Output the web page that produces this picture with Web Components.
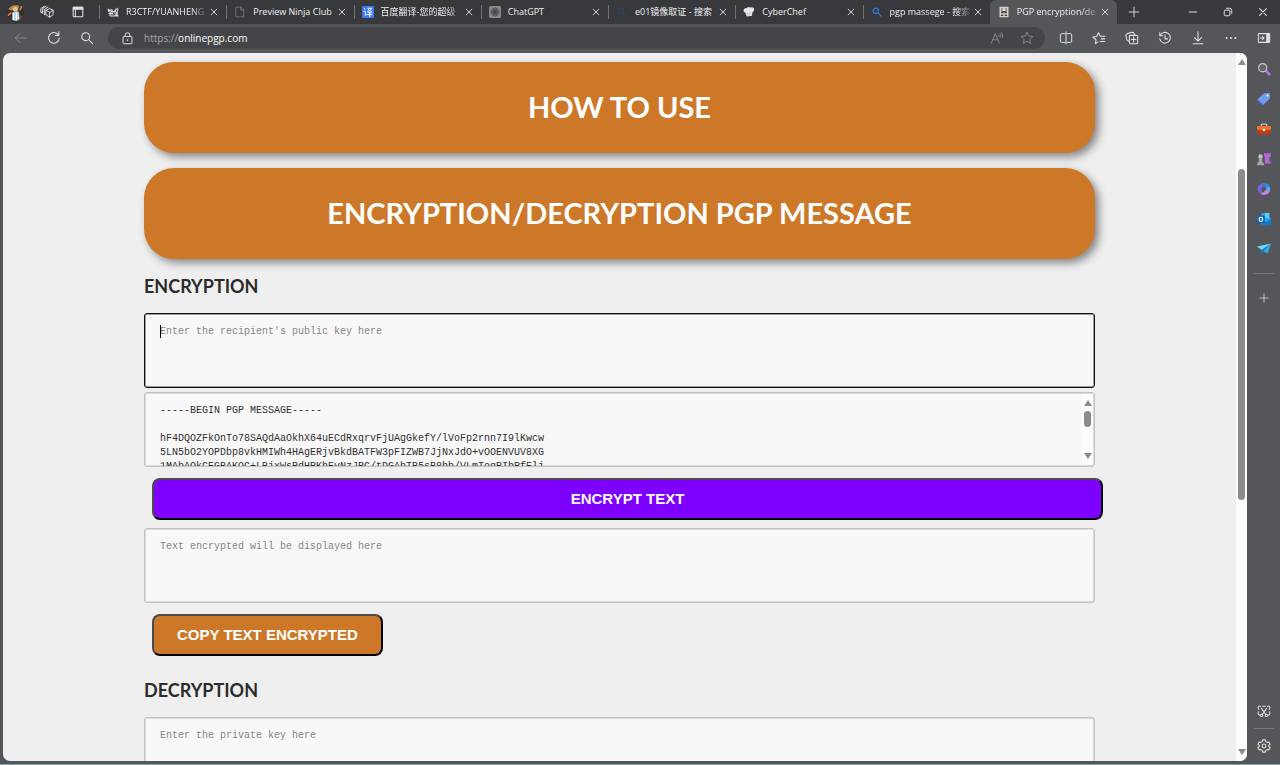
<!DOCTYPE html>
<html lang="en">
<head>
<meta charset="utf-8">
<title>PGP encryption/decryption</title>
<style>
	html, body {
		margin: 0;
		height: 100%;
	}
	body {
		overflow: hidden;
		font-family: "Open Sans", "Noto Sans CJK SC", sans-serif;
		background: #55565a;
	}
</style>
</head>
<body>
<browser-window>
	<browser-tab slot="tabs" icon="cat" text="R3CTF/YUANHENG" long></browser-tab>
	<browser-tab slot="tabs" icon="page" text="Preview Ninja Club"></browser-tab>
	<browser-tab slot="tabs" icon="translate" text="百度翻译-您的超级" long></browser-tab>
	<browser-tab slot="tabs" icon="gpt" text="ChatGPT"></browser-tab>
	<browser-tab slot="tabs" icon="find-dark" text="e01镜像取证 - 搜索"></browser-tab>
	<browser-tab slot="tabs" icon="chef" text="CyberChef"></browser-tab>
	<browser-tab slot="tabs" icon="find-blue" text="pgp massege - 搜索" long></browser-tab>
	<browser-tab slot="tabs" icon="stamp" text="PGP encryption/de" long active></browser-tab>
	<pgp-page></pgp-page>
</browser-window>

<script>
const line = (d,w=1) => `<path d="${d}" fill="none" stroke="currentColor" stroke-width="${w}" stroke-linecap="round" stroke-linejoin="round"/>`;

// every icon is drawn on a 16x16 grid
const icons = {
	avatar: `<circle cx="8" cy="8" r="8" fill="#3b3028"/><path d="M1 5Q6-1 12 2L10 5 4 6z" fill="#b98345"/><circle cx="8" cy="5" r="2.4" fill="#d8c7a2"/><path d="M5 8l6-1 1 7-3 2-4-1z" fill="#b9d7e8"/><path d="M6 8v7M9 8v7" stroke="#fff"/><path d="M12 6l2-4M4 8L1 11" stroke="#c98850" stroke-width="1.5"/><path d="M12 10l3 2-3 3z" fill="#8b3928"/>`,
	workspaces: line("M7 6l4-2 4 2v5l-4 3-4-3zM7 6l4 2.500 4-2.500M11 8.500V14M5 10.500V5l4-2.500M5 10.500l1 .5M3 9V4l4-2.500M1 8V4l4-2.500M1 8l2 1.500",1.1),
	pane: line("M2.500 3.500q0-1 1-1h9q1 0 1 1v9q0 1-1 1h-9q-1 0-1-1zM5 6v7",1.2)+`<path d="M2 2h12v3.500H2z" fill="currentColor"/>`,
	cat: `<path d="M1 3l3 2 3-1 1 3 3-2 1-3 1 2 2-2v4l-1 5 2 3H5l-3-1 3-1-4-2 3-1-3-2z" fill="#d5d5d5"/><path d="M4 7l2 2M8 8l1 3M11 8l-1 4M5 12h5M13 5v3" stroke="#333" stroke-width="1.200"/>`,
	page: line("M3 1.500h6l4 4v9H3zM9 1.500v4h4",1).replace("currentColor","#818286"),
	translate: `<rect width="16" height="16" rx="1" fill="#3a7cf4"/><path d="M2.500 3l2 1.500M2 7h2.500v5.500l1.500-1M7 3h6q-2 4-6 4.500M8 4q2 3 5.500 3.500M7.500 9h5.500M6.500 11.500h7.500M10.300 8v7" stroke="#fff" stroke-width="1.200" fill="none"/>`,
	gpt: `<rect width="16" height="16" rx="2" fill="#88898b"/><g fill="none" stroke="#3d3e40" stroke-width=".9"><ellipse cx="8" cy="5.500" rx="2.600" ry="3"/><ellipse cx="8" cy="5.500" rx="2.600" ry="3" transform="rotate(60 8 8)"/><ellipse cx="8" cy="5.500" rx="2.600" ry="3" transform="rotate(120 8 8)"/><ellipse cx="8" cy="5.500" rx="2.600" ry="3" transform="rotate(180 8 8)"/><ellipse cx="8" cy="5.500" rx="2.600" ry="3" transform="rotate(240 8 8)"/><ellipse cx="8" cy="5.500" rx="2.600" ry="3" transform="rotate(300 8 8)"/></g>`,
	"find-dark": line("M10 6.500a3.500 3.500 0 1 1-7 0 3.500 3.500 0 1 1 7 0M9.500 9.500L13.500 13.500",1.5).replace("currentColor","#294466"),
	"find-blue": line("M10 6.500a3.500 3.500 0 1 1-7 0 3.500 3.500 0 1 1 7 0M9.500 9.500L13.500 13.500",1.8).replace("currentColor","#2e74ce"),
	chef: `<path d="M3 8.500Q0 8 1 4.500q2-3 4-1.500 2-3 5-1 4-1 5 2 0 3.500-2.500 4.500L12 13l-7 1z" fill="#e6e6e6"/><path d="M6 8l.5 5M9 8v4" stroke="#b5b5b5"/>`,
	stamp: `<rect x="2" y="1" width="12" height="14" rx="1" fill="#d6d2c8"/><path d="M4 3h8v7H4z" fill="#8b877d"/><circle cx="8" cy="5" r="2" fill="#eee9dc"/><path d="M5 9q3-3 6 0M4 12.500h3M9 12.500h3" stroke="#3b3b3b" stroke-width="1.500" fill="none"/>`,
	close: line("M3.500 3.500l9 9M12.500 3.500l-9 9",1.4),
	plus: line("M8 1.500v13M1.500 8h13",1.2),
	minimize: line("M3 8h10",1.3),
	restore: line("M3 6.500q0-1 1-1h5.500q1 0 1 1V12q0 1-1 1H4q-1 0-1-1zM6 3h4q3 0 3 3v4",1.3),
	back: line("M14.500 8h-13M7 2.500L1.500 8 7 13.500").replace("currentColor","#8b8c90"),
	refresh: line("M13 4.500A6.100 6.100 0 1 0 14 8M13.500 1v4h-4",1.2),
	search: line("M11 6.500a4.500 4.500 0 1 1-9 0 4.500 4.500 0 1 1 9 0M10 10l4.500 4.500",1.2),
	lock: line("M2.500 6.500q0-1 1-1h9q1 0 1 1v7q0 1-1 1h-9q-1 0-1-1zM5 5.500V4q0-3 3-3t3 3v1.500",1.2)+`<circle cx="8" cy="10" r="1" fill="currentColor"/>`,
	read: line("M1.500 14L6 3l4.500 11M3 10h6M10 4.500q1 1 .5 2M11.500 3q2 1.500 1 4M13 1.500q2.500 2.500 1.500 6"),
	star: line("M8 1.500l2 4.200 4.600.6-3.400 3.200.9 4.600L8 11.900l-4.100 2.200.9-4.600L1.400 6.300 6 5.700z"),
	split: line("M7 3H3Q1.500 3 1.500 4.500v7Q1.500 13 3 13h4M9 3h4q1.500 0 1.500 1.500v7Q14.500 13 13 13H9M8 1v14",1.1),
	favorites: line("M7 12.500l-3 2 .6-4.500L1 7l4.300-.7L7.500 2l2 4h5M10.500 9h4M9.500 12h5",1.2),
	collections: line("M6 5h7q1.500 0 1.500 1.500v6.500q0 1.500-1.500 1.500H6.500Q5 14.500 5 13V6q0-1 1-1M9.800 7v5.500M7 9.800h5.500M5 12l-1-.5Q2.500 11 2 9.500L1 5q0-1.500 1.500-2l6-1.500Q10 1.500 10.500 3l.3 1.500",1.2),
	history: line("M2.500 5A6.100 6.100 0 1 1 2 9M2 2v3.500h3.500M8 4.500V9h3",1.2),
	download: line("M8 1v10M4 7.500l4 4 4-4M2.500 14.500h11",1.2),
	more: `<g fill="currentColor"><circle cx="3" cy="8" r="1.200"/><circle cx="8" cy="8" r="1.200"/><circle cx="13" cy="8" r="1.200"/></g>`,
	sidebar: line("M2.500 3h11q1 0 1 1v8q0 1-1 1h-11q-1 0-1-1V4q0-1 1-1M3.500 8h4.500M6 6l2 2-2 2",1.2)+`<path d="M10.500 3h4v10h-4z" fill="currentColor"/>`,
	"side-search": `<path d="M10.500 10.500l3.500 3.500" stroke="#b474ee" stroke-width="3" stroke-linecap="round"/><circle cx="6.500" cy="6.500" r="4.700" fill="#66676b" stroke="#c5c5c7" stroke-width="1.400"/>`,
	tag: `<path d="M8 1.500l6.500-.5.500 6-7.500 7.500q-1 1-2 0L1 10q-1-1 0-2z" fill="#719bed"/><path d="M1 9l7 6-1 .3q-1 .5-2-.8L1 10z" fill="#4261b9"/><circle cx="12" cy="4" r="1.200" fill="#fff"/>`,
	briefcase: `<path d="M5 5V3.500q0-1 1-1h4q1 0 1 1V5" fill="none" stroke="#b9c1c8" stroke-width="1.500"/><rect y="4.500" width="16" height="5" rx="1" fill="#f36d31"/><path d="M1 9h14v5H1z" fill="#c43c12"/><circle cx="8" cy="9" r="1.600" fill="#d7e5ec"/>`,
	games: `<path d="M8 1h2v1h1V1h2v1h1V1h2v4l-2 1 .5 5H16v2H9V6L8 5z" fill="#b367d6"/><circle cx="4" cy="5" r="2.500" fill="#c5c5c5"/><path d="M2 7h4v4l2 2v2H0v-2l2-2z" fill="#a6a6a6"/>`,
	office: `<path d="M8 1L3 3Q0 5 1 10l3 4 2-2-1-5 4-3z" fill="#7464d8"/><path d="M7 1q7 0 8 5v4l-4-1q-1-4-5-5z" fill="#3e7ed8"/><path d="M15 9q0 3-4 5-4 2-7-1l4-2 3-3z" fill="#bd84e7"/><path d="M11 5l4 1v4l-4-1z" fill="#42b5e6"/>`,
	outlook: `<path d="M5 1h9v5l2 1v7H4z" fill="#28a6e5"/><path d="M9 1h5v6H9z" fill="#55d1f5"/><path d="M4 15l12-7v7z" fill="#1775cb"/><rect y="4" width="9" height="9" rx="1" fill="#1261b2"/><ellipse cx="4.500" cy="8.500" rx="2" ry="2.300" fill="none" stroke="#fff" stroke-width="1.300"/>`,
	send: `<path d="M0 5l16-3-4 11-5-3z" fill="#32afea"/><path d="M0 5l16-3L6 9z" fill="#74d4fb"/><path d="M5 9l11-7-8 8-3 4z" fill="#187bc2"/>`,
	capture: line("M1.500 6V3.500q0-1 1-1H4M6.500 2.500h3M12 2.500h1.500q1 0 1 1V6M1.500 9v2.500q0 1 1 1H4M14.500 9v2.500q0 1-1 1H13M5 5l5 7M11 5l-5 7M6.500 13a1.300 1.300 0 1 1-2.600 0 1.300 1.300 0 1 1 2.600 0M12 13a1.300 1.300 0 1 1-2.600 0 1.300 1.300 0 1 1 2.600 0",1.2),
	settings: line("M6.500 1h3l.5 2 1.500.9 2-.6L15 6l-1.500 1.400v1.200L15 10l-1.500 2.700-2-.6-1.500.9-.5 2h-3L6 13l-1.500-.9-2 .6L1 10l1.500-1.400V7.400L1 6l1.500-2.700 2 .6L6 3zM10.200 8a2.200 2.200 0 1 1-4.400 0 2.200 2.200 0 1 1 4.400 0",1.2)
};

class UiIcon extends HTMLElement {
	connectedCallback(){
		const size = this.getAttribute("size") || 14;
		this.attachShadow({mode:"open"});
		this.shadowRoot.innerHTML = /*html*/`
			<style>
				:host {
					display: block;
					flex: none;
					width: ${size}px;
					height: ${size}px;
				}
				svg {
					display: block;
					width: 100%;
					height: 100%;
				}
			</style>
			<svg viewBox="0 0 16 16" aria-hidden="true">${icons[this.getAttribute("name")]}</svg>
		`;
	}
}
customElements.define("ui-icon",UiIcon);

class IconButton extends HTMLElement {
	connectedCallback(){
		this.attachShadow({mode:"open"});
		this.shadowRoot.innerHTML = /*html*/`
			<style>
				:host {
					display: flex;
					flex: none;
					color: #e2e2e3;
				}
				button {
					display: flex;
					align-items: center;
					justify-content: center;
					width: 100%;
					padding: 0;
					border: 0;
					background: none;
					color: inherit;
				}
			</style>
			<button aria-label="${this.getAttribute("label")}"><ui-icon name="${this.getAttribute("icon")}" size="${this.getAttribute("size")||14}"></ui-icon></button>
		`;
	}
}
customElements.define("icon-button",IconButton);

class BrowserTab extends HTMLElement {
	connectedCallback(){
		this.attachShadow({mode:"open"});
		this.shadowRoot.innerHTML = /*html*/`
			<style>
				:host {
					display: flex;
					flex: 1;
					align-items: center;
					min-width: 0;
					position: relative;
					padding: 0 5px 0 8px;
					box-sizing: border-box;
					color: #f0f0f0;
				}
				:host::before {
					content: "";
					position: absolute;
					left: 0;
					top: 5px;
					width: 1px;
					height: 14px;
					background: #707175;
				}
				:host([active]) {
					background: #55565a;
					border-radius: 6px 6px 0 0;
				}
				:host([active])::before {
					display: none;
				}
				button {
					display: flex;
					flex: 1;
					align-items: center;
					gap: 7px;
					min-width: 0;
					padding: 0;
					border: 0;
					background: none;
					color: inherit;
					font: 9px/16px "Open Sans", "Noto Sans CJK SC", sans-serif;
					text-align: left;
				}
				span {
					flex: 1;
					overflow: hidden;
					white-space: nowrap;
				}
				:host([long]) span {
					mask-image: linear-gradient(to right, #000 calc(100% - 16px), #0002);
				}
				icon-button {
					width: 14px;
				}
			</style>
			<button><ui-icon name="${this.getAttribute("icon")}" size="12"></ui-icon><span>${this.getAttribute("text")}</span></button>
			<icon-button icon="close" label="Close tab" size="10"></icon-button>
		`;
	}
}
customElements.define("browser-tab",BrowserTab);

class ScrollTrack extends HTMLElement {
	connectedCallback(){
		// start and end are the empty shares of the track round the thumb
		const start = this.getAttribute("start");
		const size = this.getAttribute("size");
		const end = this.getAttribute("end");
		this.attachShadow({mode:"open"});
		this.shadowRoot.innerHTML = /*html*/`
			<style>
				:host {
					display: flex;
					flex-direction: column;
					align-items: center;
					width: 11px;
					padding: 6px 0;
					box-sizing: border-box;
					background: #fcfcfc;
				}
				i {
					border: 4px solid transparent;
					border-top: 0;
					border-bottom: 6px solid #8b8b8b;
				}
				i:last-child {
					transform: rotate(180deg);
				}
				div {
					display: grid;
					flex: 1;
					grid-template-rows: ${start}fr ${size}fr ${end}fr;
				}
				b {
					grid-row: 2;
					width: 7px;
					border-radius: 4px;
					background: #8b8b8b;
				}
			</style>
			<i></i><div><b></b></div><i></i>
		`;
	}
}
customElements.define("scroll-track",ScrollTrack);

class PgpBanner extends HTMLElement {
	constructor(){
		super();
		this.attachShadow({mode:"open"});
		this.shadowRoot.innerHTML = /*html*/`
			<style>
				:host {
					display: block;
					margin-bottom: 15px;
				}
				button {
					display: block;
					width: 100%;
					padding: 26px 16px 27px;
					border: 0;
					border-radius: 30px;
					background: #cd7829;
					box-shadow: 4px 4px 8px #00000070;
					color: #fff;
					font: 700 29px/38px Lato, sans-serif;
					text-transform: uppercase;
				}
			</style>
			<button><slot></slot></button>
		`;
	}
}
customElements.define("pgp-banner",PgpBanner);

class PgpArea extends HTMLElement {
	connectedCallback(){
		const scroll = this.hasAttribute("scroll");
		this.attachShadow({mode:"open"});
		this.shadowRoot.innerHTML = /*html*/`
			<style>
				:host {
					display: block;
					position: relative;
					margin-bottom: 4px;
				}
				textarea {
					display: block;
					width: 100%;
					height: 75px;
					box-sizing: border-box;
					padding: 11px 15px 0;
					border: 1px solid #c4c4c4;
					border-radius: 3px;
					outline: 0;
					box-shadow: inset 0 0 0 1px #00000020;
					overflow: hidden;
					resize: none;
					background: #f8f8f8;
					color: #2f2f2f;
					font: 10px/14px "Liberation Mono", monospace;
				}
				textarea::placeholder {
					color: #868686;
				}
				:host([active]) textarea {
					border-color: #101010;
					box-shadow: inset 0 0 0 1px #00000060;
				}
				.caret {
					position: absolute;
					left: 16px;
					top: 12px;
					width: 1px;
					height: 13px;
					background: #000;
				}
				scroll-track {
					position: absolute;
					top: 2px;
					right: 2px;
					bottom: 2px;
				}
			</style>
			<textarea aria-label="${this.getAttribute("label")}" placeholder="${this.getAttribute("placeholder")||""}"></textarea>
			${this.hasAttribute("active")?`<span class="caret"></span>`:""}
			${scroll?`<scroll-track start="5" size="16" end="26"></scroll-track>`:""}
		`;
		this.shadowRoot.querySelector("textarea").value = this.getAttribute("value")||"";
	}
}
customElements.define("pgp-area",PgpArea);

class PgpButton extends HTMLElement {
	constructor(){
		super();
		this.attachShadow({mode:"open"});
		this.shadowRoot.innerHTML = /*html*/`
			<style>
				:host {
					display: block;
					margin: 11px -8px 8px 8px;
				}
				button {
					display: block;
					padding: 10px 23px;
					border: 2px solid;
					border-color: #4c4c4c #000 #000 #4c4c4c;
					border-radius: 8px;
					background: #cd7829;
					color: #fff;
					font: 700 15px/18px "Liberation Sans", Arial, sans-serif;
					text-transform: uppercase;
				}
				:host([wide]) button {
					width: 100%;
					background: #7e00ff;
				}
			</style>
			<button><slot></slot></button>
		`;
	}
}
customElements.define("pgp-button",PgpButton);

const message = `-----BEGIN PGP MESSAGE-----

hF4DQOZFkOnTo78SAQdAaOkhX64uECdRxqrvFjUAgGkefY/lVoFp2rnn7I9lKwcw
5LN5bO2YOPDbp8vkHMIWh4HAgERjvBkdBATFW3pFIZWB7JjNxJdO+vOOENVUV8XG
1MAbAQkCEGBAKQC+LBjxWsPdHPKhEyNzJPC/tDGAbTB5sB8bb/VLmToqPIbRfElj`;

class PgpPage extends HTMLElement {
	constructor(){
		super();
		this.attachShadow({mode:"open"});
		this.shadowRoot.innerHTML = /*html*/`
			<style>
				:host {
					display: flex;
					flex: 1;
					min-width: 0;
					overflow: hidden;
					border-radius: 7px;
					background: #efefef;
				}
				main {
					flex: 1;
					min-width: 0;
					padding: 9px 141px 0;
				}
				h2 {
					margin: 0;
					padding: 0 0 14px;
					color: #2c2c2c;
					font: 700 18px/25px Lato, sans-serif;
				}
				h2.next {
					padding-top: 14px;
				}
			</style>
			<main>
				<pgp-banner>How to use</pgp-banner>
				<pgp-banner>Encryption/decryption PGP message</pgp-banner>
				<h2>ENCRYPTION</h2>
				<pgp-area active label="Public key" placeholder="Enter the recipient's public key here"></pgp-area>
				<pgp-area scroll label="Message" value="${message}"></pgp-area>
				<pgp-button wide>Encrypt text</pgp-button>
				<pgp-area label="Encrypted text" placeholder="Text encrypted will be displayed here"></pgp-area>
				<pgp-button>Copy text encrypted</pgp-button>
				<h2 class="next">DECRYPTION</h2>
				<pgp-area label="Private key" placeholder="Enter the private key here"></pgp-area>
			</main>
			<scroll-track start="104" size="331" end="249"></scroll-track>
		`;
	}
}
customElements.define("pgp-page",PgpPage);

class BrowserWindow extends HTMLElement {
	constructor(){
		super();
		this.attachShadow({mode:"open"});
		this.shadowRoot.innerHTML = /*html*/`
			<style>
				:host {
					display: flex;
					flex-direction: column;
					height: 100vh;
					box-sizing: border-box;
					border-bottom: 1px solid #8ba3a5;
				}
				.row {
					display: flex;
					flex: none;
				}
				.titlebar {
					height: 24px;
					background: #38393c;
				}
				.left {
					width: 99px;
				}
				.left icon-button {
					width: 31px;
				}
				.tabs {
					display: flex;
					flex: 1;
					min-width: 0;
				}
				.titlebar .new {
					width: 34px;
				}
				.controls {
					margin-left: 24px;
				}
				.controls icon-button {
					width: 35px;
				}
				.toolbar {
					height: 29px;
					padding-bottom: 1px;
					box-sizing: border-box;
					align-items: center;
				}
				.toolbar icon-button {
					width: 33px;
				}
				.nav {
					padding: 0 5px 0 4px;
				}
				.address {
					display: flex;
					flex: 1;
					align-items: center;
					height: 22px;
					padding: 0 3px;
					border-radius: 11px;
					background: #444548;
				}
				.address .faint {
					width: 30px;
					color: #8e8f92;
				}
				.url {
					display: flex;
					flex: 1;
					font: 10px/16px "Open Sans", sans-serif;
					color: #a4a5a8;
				}
				.url a {
					color: #fff;
					text-decoration: none;
				}
				.tools {
					padding-left: 4px;
				}
				.body {
					display: flex;
					flex: 1;
					min-height: 0;
					padding: 0 0 3px 3px;
				}
				::slotted(pgp-page) {
					flex: 1;
				}
				aside {
					display: flex;
					flex-direction: column;
					flex: none;
					width: 33px;
					padding-top: 1px;
				}
				aside icon-button {
					height: 30px;
				}
				hr {
					width: 20px;
					height: 1px;
					margin: 9px auto;
					border: 0;
					background: #77787b;
				}
				.space {
					flex: 1;
				}
				hr.tight {
					margin: 2px auto;
				}
			</style>
			<div class="row titlebar">
				<div class="row left">
					<icon-button icon="avatar" label="Profile" size="17"></icon-button>
					<icon-button icon="workspaces" label="Workspaces"></icon-button>
					<icon-button icon="pane" label="Tab actions"></icon-button>
				</div>
				<nav class="tabs"><slot name="tabs"></slot></nav>
				<icon-button class="new" icon="plus" label="New tab" size="12"></icon-button>
				<div class="row controls">
					<icon-button icon="minimize" label="Minimize" size="12"></icon-button>
					<icon-button icon="restore" label="Restore" size="12"></icon-button>
					<icon-button icon="close" label="Close" size="12"></icon-button>
				</div>
			</div>
			<div class="row toolbar">
				<div class="row nav">
					<icon-button icon="back" label="Back"></icon-button>
					<icon-button icon="refresh" label="Refresh"></icon-button>
					<icon-button icon="search" label="Search"></icon-button>
				</div>
				<div class="address">
					<icon-button icon="lock" label="Site information" size="13"></icon-button>
					<div class="url">https://<a href="https://onlinepgp.com">onlinepgp.com</a></div>
					<icon-button class="faint" icon="read" label="Read aloud"></icon-button>
					<icon-button class="faint" icon="star" label="Add to favorites"></icon-button>
				</div>
				<div class="row tools">
					<icon-button icon="split" label="Split screen"></icon-button>
					<icon-button icon="favorites" label="Favorites"></icon-button>
					<icon-button icon="collections" label="Collections"></icon-button>
					<icon-button icon="history" label="History"></icon-button>
					<icon-button icon="download" label="Downloads"></icon-button>
					<icon-button icon="more" label="More"></icon-button>
					<icon-button icon="sidebar" label="Sidebar"></icon-button>
				</div>
			</div>
			<div class="body">
				<slot></slot>
				<aside>
					<icon-button icon="side-search" label="Search"></icon-button>
					<icon-button icon="tag" label="Shopping"></icon-button>
					<icon-button icon="briefcase" label="Tools"></icon-button>
					<icon-button icon="games" label="Games"></icon-button>
					<icon-button icon="office" label="Microsoft 365"></icon-button>
					<icon-button icon="outlook" label="Outlook"></icon-button>
					<icon-button icon="send" label="Drop"></icon-button>
					<hr>
					<icon-button icon="plus" label="Customize" size="10"></icon-button>
					<div class="space"></div>
					<icon-button icon="capture" label="Screenshot"></icon-button>
					<hr class="tight">
					<icon-button icon="settings" label="Settings"></icon-button>
				</aside>
			</div>
		`;
	}
}
customElements.define("browser-window",BrowserWindow);
</script>
</body>
</html>
